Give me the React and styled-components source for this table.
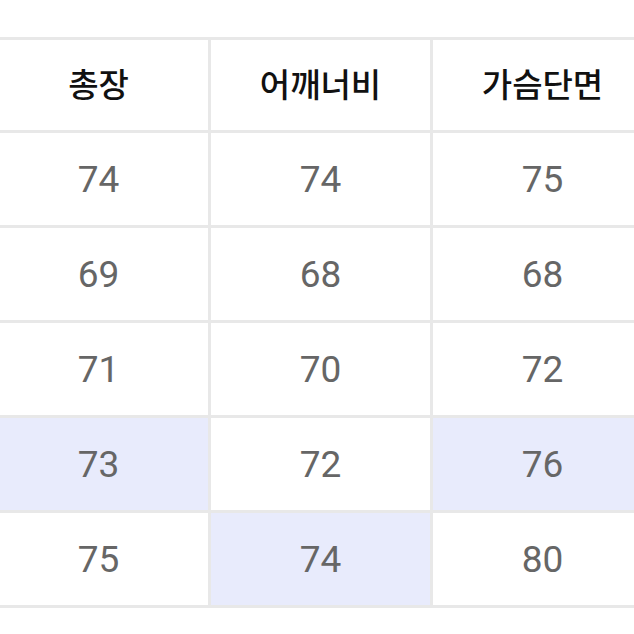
import styled, { createGlobalStyle } from 'styled-components';

const GlobalStyle = createGlobalStyle`
  html, body { margin: 0; padding: 0; background: #ffffff; overflow: hidden; }
  body { font-family: Roboto, "Noto Sans CJK KR", sans-serif; }
`;

const Page = styled.div`
  width: 634px;
  height: 634px;
  overflow: hidden;
  padding-top: 37px;
  box-sizing: border-box;
`;

const Grid = styled.div`
  display: grid;
  grid-template-columns: repeat(3, 219px);
  grid-template-rows: 90px repeat(5, 92px);
  gap: 3px;
  padding: 3px 0;
  margin-left: -11px;
  width: max-content;
  background: #e8e8e8;
`;

const HeadCell = styled.div`
  display: flex;
  align-items: center;
  justify-content: center;
  padding-bottom: 4px;
  background: #ffffff;
  font-family: "Noto Sans CJK KR", "Noto Sans", sans-serif;
  font-size: 33px;
  font-weight: 500;
  color: #111111;
`;

const Cell = styled.div`
  display: flex;
  align-items: center;
  justify-content: center;
  background: ${(p) => (p.$marked ? '#e8ebfc' : '#ffffff')};
  font-family: Roboto, "Noto Sans", sans-serif;
  font-size: 37px;
  font-weight: 400;
  color: #666666;
`;

const headers = ['총장', '어깨너비', '가슴단면'];

const rows = [
  [74, 74, 75],
  [69, 68, 68],
  [71, 70, 72],
  [73, 72, 76],
  [75, 74, 80],
];

// 표시된 칸 (행, 열)
const marked = ['3-0', '3-2', '4-1'];

export default function App() {
  return (
    <>
      <GlobalStyle />
      <Page>
        <Grid>
          {headers.map((h) => (
            <HeadCell key={h}>{h}</HeadCell>
          ))}
          {rows.map((r, i) =>
            r.map((v, j) => (
              <Cell key={`${i}-${j}`} $marked={marked.includes(`${i}-${j}`)}>
                {v}
              </Cell>
            ))
          )}
        </Grid>
      </Page>
    </>
  );
}
